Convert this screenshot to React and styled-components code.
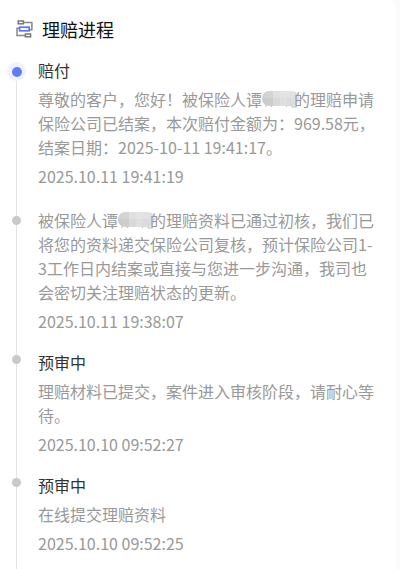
import React from 'react';
import styled, { createGlobalStyle } from 'styled-components';

const GlobalStyle = createGlobalStyle`
	* {
		box-sizing: border-box;
	}
	body {
		margin: 0;
		background: #fafafa;
		font-family: 'Noto Sans CJK SC', 'Noto Sans', sans-serif;
	}
`;

const Panel = styled.main`
	min-height: 100vh;
	margin-right: 4px;
	padding: 15px 17px 0 7px;
	background: #fff;
	border-radius: 0 6px 0 0;
`;

const Header = styled.header`
	display: flex;
	align-items: center;
	gap: 8px;
	padding: 0 0 15px 8px;
`;

const Title = styled.h1`
	margin: 0;
	color: #111;
	font-size: 18px;
	font-weight: 400;
	line-height: 28px;
`;

const Timeline = styled.ol`
	margin: 0;
	padding: 0;
	list-style: none;
`;

const Entry = styled.li`
	display: flex;
	gap: 12px;
`;

const Rail = styled.div`
	position: relative;
	display: flex;
	flex: none;
	justify-content: center;
	align-items: flex-start;
	width: 19px;
	padding-top: ${ ( { $offset } ) => $offset }px;

	&::before {
		content: '';
		position: absolute;
		top: ${ ( { $first } ) => ( $first ? '12px' : '0' ) };
		bottom: 0;
		left: 9px;
		width: 1px;
		background: #e4e4e4;
	}
`;

const Dot = styled.span`
	position: relative;
	width: 9px;
	height: 9px;
	border-radius: 50%;
	background: #c9c9c9;
`;

const ActiveDot = styled.span`
	position: relative;
	display: flex;
	align-items: center;
	justify-content: center;
	width: 19px;
	height: 19px;
	border-radius: 50%;
	background: #f0f3ff;

	&::before {
		content: '';
		width: 10px;
		height: 10px;
		border-radius: 50%;
		background: #5f7cfb;
	}
`;

const Content = styled.div`
	flex: 1;
	min-width: 0;
	padding: ${ ( { $untitled } ) => ( $untitled ? '3px' : '0' ) } 0 17px;
	color: #999;
	font-size: 16px;
	line-height: 24px;
`;

const Status = styled.h2`
	margin: 0 0 5px;
	color: #333;
	font-size: 16px;
	font-weight: 400;
	line-height: 24px;
`;

const Message = styled.p`
	margin: 0 0 5px;
`;

const Time = styled.time`
	display: block;
`;

const Mask = styled.span`
	display: inline-block;
	width: 32px;
	height: 16px;
	vertical-align: -2px;

	svg {
		display: block;
		overflow: visible;
	}
`;

const ProcessIcon = () => (
		<svg width='19' height='20' viewBox='0 0 19 20' fill='none' strokeWidth='1.5' aria-hidden='true'>
			<path d='M8 3.5h8.9v7.2h-3M4.5 9.3H2v7.2h8.5' stroke='#888'/>
			<rect x='3.2' y='2' width='5.2' height='2.8' stroke='#777'/>
			<rect x='10.4' y='15' width='5.2' height='2.8' stroke='#777'/>
			<rect x='4.6' y='8.2' width='9.6' height='3.6' stroke='#5975fa' strokeWidth='1.7'/>
		</svg>
);

const MASK_TONES = [ '#d2d2d2', '#d4d4d4', '#e0e0e0', '#e4e4e4', '#e2e2e2', '#dedede' ];
const MASK_LOWER = [ '#cccccc', '#cdcdcd', '#d9d9d9', '#dfdfdf', '#dbdbdb', '#e0e0e0' ];

const HiddenName = ( { id } ) => (
		<Mask role='img' aria-label='***'>
			<svg width='32' height='16' viewBox='0 0 32 16'>
				<path d='M4 13v2M8 13l2 2M26 13l-2 2M29 13l1 2h3' stroke='#b8b8b8' fill='none'/>
				<clipPath id={ id }>
					<rect x='0' y='-1' width='37' height='15' rx='7'/>
				</clipPath>
				<g clipPath={ `url(#${ id })` }>
					{ MASK_TONES.map( ( tone, i ) => (
							<rect key={ i } x={ i * 7 - 3 } y='-1' width='7' height='7' fill={ tone }/>
					) ) }
					{ MASK_LOWER.map( ( tone, i ) => (
							<rect key={ i } x={ i * 7 - 3 } y='6' width='7' height='9' fill={ tone }/>
					) ) }
				</g>
			</svg>
		</Mask>
);

const entries = [
	{
		status: '赔付',
		active: true,
		message: <>尊敬的客户，您好！被保险人谭<HiddenName id='name-paid'/>的理赔申请保险公司已结案，本次赔付金额为：969.58元，结案日期：2025-10-11 19:41:17。</>,
		time: '2025.10.11 19:41:19',
	},
	{
		message: <>被保险人谭<HiddenName id='name-review'/>的理赔资料已通过初核，我们已将您的资料递交保险公司复核，预计保险公司1-3工作日内结案或直接与您进一步沟通，我司也会密切关注理赔状态的更新。</>,
		time: '2025.10.11 19:38:07',
	},
	{
		status: '预审中',
		message: '理赔材料已提交，案件进入审核阶段，请耐心等待。',
		time: '2025.10.10 09:52:27',
	},
	{
		status: '预审中',
		message: '在线提交理赔资料',
		time: '2025.10.10 09:52:25',
	},
];

const railOffset = ( { active, status } ) => {
	if ( active ) {
		return 4;
	}
	return status ? 5 : 11;
};

const App = () => (
		<>
			<GlobalStyle/>
			<Panel lang='zh-CN'>
				<Header>
					<ProcessIcon/>
					<Title>理赔进程</Title>
				</Header>
				<Timeline>
					{ entries.map( ( entry, i ) => (
							<Entry key={ entry.time }>
								<Rail $first={ i === 0 } $offset={ railOffset( entry ) }>
									{ entry.active ? <ActiveDot/> : <Dot/> }
								</Rail>
								<Content $untitled={ !entry.status }>
									{ entry.status && <Status>{ entry.status }</Status> }
									<Message>{ entry.message }</Message>
									<Time>{ entry.time }</Time>
								</Content>
							</Entry>
					) ) }
				</Timeline>
			</Panel>
		</>
);

export default App;
